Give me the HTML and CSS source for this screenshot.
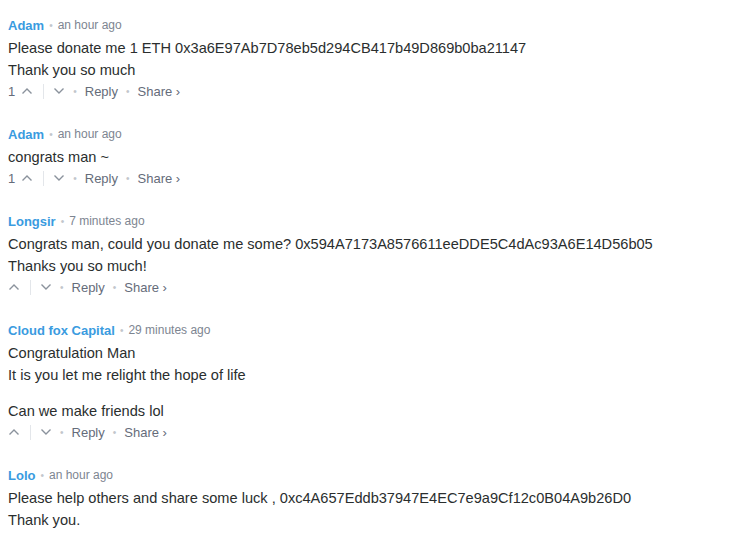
FILE: index.html
```html
<!DOCTYPE html>
<html lang="en">
<head>
  <meta charset="UTF-8">
  <title>Comments</title>
  <link rel="stylesheet" href="styles.css">
</head>
<body>
  <ul class="comments">
    <li class="comment">
      <div class="comment-header">
        <a class="author" href="#">Adam</a>
        <span class="bullet">&bull;</span>
        <span class="time">an hour ago</span>
      </div>
      <div class="comment-body">
        <p>Please donate me 1 ETH 0x3a6E97Ab7D78eb5d294CB417b49D869b0ba21147<br>Thank you so much</p>
      </div>
      <div class="comment-actions">
        <span class="count">1</span>
        <span class="vote up"><svg width="12" height="8" viewBox="0 0 12 8"><path d="M1.5 6.5 L6 2 L10.5 6.5"/></svg></span>
        <span class="divider"></span>
        <span class="vote down"><svg width="12" height="8" viewBox="0 0 12 8"><path d="M1.5 1.5 L6 6 L10.5 1.5"/></svg></span>
        <span class="bullet">&bull;</span>
        <a class="action" href="#">Reply</a>
        <span class="bullet">&bull;</span>
        <a class="action" href="#">Share &rsaquo;</a>
      </div>
    </li>

    <li class="comment">
      <div class="comment-header">
        <a class="author" href="#">Adam</a>
        <span class="bullet">&bull;</span>
        <span class="time">an hour ago</span>
      </div>
      <div class="comment-body">
        <p>congrats man ~</p>
      </div>
      <div class="comment-actions">
        <span class="count">1</span>
        <span class="vote up"><svg width="12" height="8" viewBox="0 0 12 8"><path d="M1.5 6.5 L6 2 L10.5 6.5"/></svg></span>
        <span class="divider"></span>
        <span class="vote down"><svg width="12" height="8" viewBox="0 0 12 8"><path d="M1.5 1.5 L6 6 L10.5 1.5"/></svg></span>
        <span class="bullet">&bull;</span>
        <a class="action" href="#">Reply</a>
        <span class="bullet">&bull;</span>
        <a class="action" href="#">Share &rsaquo;</a>
      </div>
    </li>

    <li class="comment">
      <div class="comment-header">
        <a class="author" href="#">Longsir</a>
        <span class="bullet">&bull;</span>
        <span class="time">7 minutes ago</span>
      </div>
      <div class="comment-body">
        <p>Congrats man, could you donate me some? 0x594A7173A8576611eeDDE5C4dAc93A6E14D56b05<br>Thanks you so much!</p>
      </div>
      <div class="comment-actions">
        <span class="vote up"><svg width="12" height="8" viewBox="0 0 12 8"><path d="M1.5 6.5 L6 2 L10.5 6.5"/></svg></span>
        <span class="divider"></span>
        <span class="vote down"><svg width="12" height="8" viewBox="0 0 12 8"><path d="M1.5 1.5 L6 6 L10.5 1.5"/></svg></span>
        <span class="bullet">&bull;</span>
        <a class="action" href="#">Reply</a>
        <span class="bullet">&bull;</span>
        <a class="action" href="#">Share &rsaquo;</a>
      </div>
    </li>

    <li class="comment">
      <div class="comment-header">
        <a class="author" href="#">Cloud fox Capital</a>
        <span class="bullet">&bull;</span>
        <span class="time">29 minutes ago</span>
      </div>
      <div class="comment-body">
        <p>Congratulation Man<br>It is you let me relight the hope of life</p>
        <p>Can we make friends lol</p>
      </div>
      <div class="comment-actions">
        <span class="vote up"><svg width="12" height="8" viewBox="0 0 12 8"><path d="M1.5 6.5 L6 2 L10.5 6.5"/></svg></span>
        <span class="divider"></span>
        <span class="vote down"><svg width="12" height="8" viewBox="0 0 12 8"><path d="M1.5 1.5 L6 6 L10.5 1.5"/></svg></span>
        <span class="bullet">&bull;</span>
        <a class="action" href="#">Reply</a>
        <span class="bullet">&bull;</span>
        <a class="action" href="#">Share &rsaquo;</a>
      </div>
    </li>

    <li class="comment">
      <div class="comment-header">
        <a class="author" href="#">Lolo</a>
        <span class="bullet">&bull;</span>
        <span class="time">an hour ago</span>
      </div>
      <div class="comment-body">
        <p>Please help others and share some luck , 0xc4A657Eddb37947E4EC7e9a9Cf12c0B04A9b26D0<br>Thank you.</p>
      </div>
    </li>
  </ul>
</body>
</html>
```

FILE: styles.css
```css
/* General styles */
body {
  margin: 0;
  padding: 16px 8px 0;
  background-color: #fff;
  font-family: "Liberation Sans", Arial, sans-serif;
  color: #2a2e2e;
}

a {
  text-decoration: none;
}

/* Comment list */
.comments {
  list-style: none;
  margin: 0;
  padding: 0;
}

.comment {
  margin-bottom: 25px;
}

/* Header: author and time */
.comment-header {
  display: flex;
  align-items: center;
  height: 18px;
  margin-bottom: 3px;
}

.author {
  font-size: 13px;
  font-weight: bold;
  color: #3a9be0;
}

.time {
  font-size: 12px;
  color: #7d8591;
}

.bullet {
  font-size: 10px;
  color: #c2c6cc;
  margin: 0 5px;
}

/* Comment text */
.comment-body p {
  margin: 0 0 14px;
  font-size: 14.6px;
  line-height: 22px;
}

.comment-body p:last-child {
  margin-bottom: 0;
}

/* Votes, reply, share */
.comment-actions {
  display: flex;
  align-items: center;
  height: 18px;
  margin-top: 1px;
  font-size: 13px;
  color: #656c7a;
}

.count {
  margin-right: 6px;
}

.vote {
  display: flex;
  align-items: center;
}

.vote svg path {
  fill: none;
  stroke: #8a929c;
  stroke-width: 1.4;
}

.divider {
  width: 1px;
  height: 15px;
  background-color: #e3e6ea;
  margin: 0 9px 0 10px;
}

.comment-actions .bullet {
  margin: 0 8px;
}

.action {
  color: #656c7a;
}
```
